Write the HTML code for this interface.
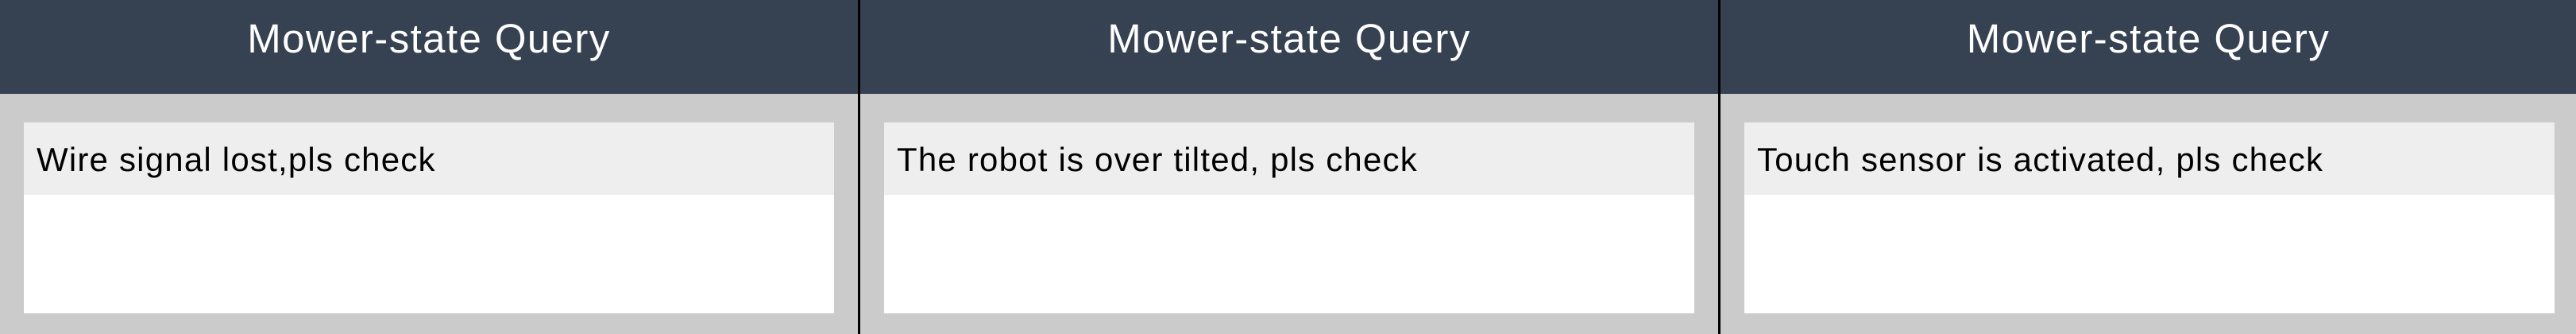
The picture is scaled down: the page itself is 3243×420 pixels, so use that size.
<!DOCTYPE html>
<html><head><meta charset="utf-8"><style>
*{margin:0;padding:0;box-sizing:border-box}
body{width:3243px;height:420px;background:#cbcbcb;position:relative;overflow:hidden;font-family:"Liberation Sans",sans-serif}
.p{position:absolute;top:0;height:420px;background:#cbcbcb}
.h{height:118px;background:#364152;color:#fff;font-size:51px;letter-spacing:1.4px;text-align:center;line-height:98px}
.c{position:absolute;left:30px;top:154px;width:1020px;height:240px;background:#fff}
.t{height:91px;background:#eeeeee;font-size:42px;letter-spacing:1.2px;line-height:94px;padding-left:16px;color:#000}
.d{position:absolute;top:0;width:3px;height:420px;background:#000}
</style></head><body>
<div class="p" style="left:0;width:1080px"><div class="h">Mower-state Query</div><div class="c"><div class="t">Wire signal lost,pls check</div></div></div>
<div class="d" style="left:1080px"></div>
<div class="p" style="left:1083px;width:1080px"><div class="h">Mower-state Query</div><div class="c"><div class="t">The robot is over tilted, pls check</div></div></div>
<div class="d" style="left:2163px"></div>
<div class="p" style="left:2166px;width:1077px"><div class="h">Mower-state Query</div><div class="c"><div class="t">Touch sensor is activated, pls check</div></div></div>
</body></html>
